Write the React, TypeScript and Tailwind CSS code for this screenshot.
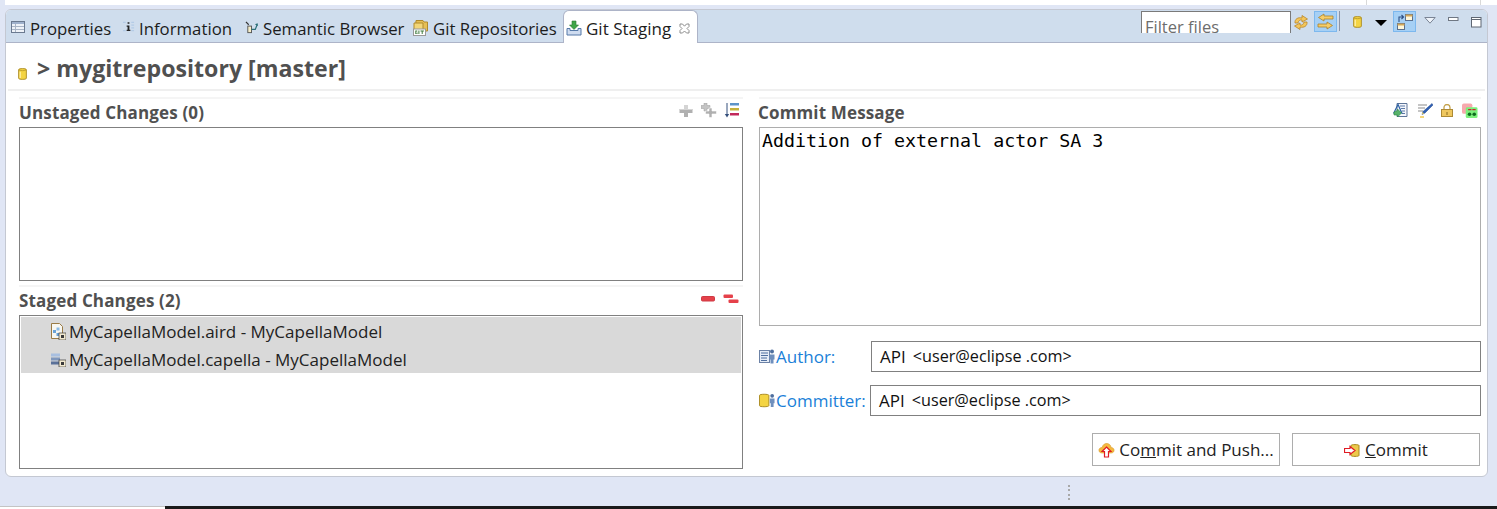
import React from 'react';

const uiFont = "font-['Open_Sans','Noto_Sans',sans-serif]";

const PropertiesIcon = () => (
  <svg width="15" height="14" viewBox="0 0 15 14" className="shrink-0">
    <rect x="0.5" y="1.5" width="13" height="11" fill="#eef2f8" stroke="#6b7a90" />
    <rect x="1" y="2" width="12" height="2" fill="#9fb1cc" />
    <path d="M1 6.5h12M1 9.5h12M4.5 4v8" stroke="#a9b5c6" />
  </svg>
);

const InformationIcon = () => (
  <svg width="13" height="14" viewBox="0 0 14 14" className="shrink-0">
    <path d="M1 2h3M1 11h3M10 2h3M10 5h3M10 8h3M10 11h3" stroke="#b4cbe6" strokeWidth="1.4" />
    <path d="M6 2h2v1.5H6zM5 5.5h3V10h1v1.2H5V10h1V6.7H5z" fill="#222" />
  </svg>
);

const SemanticIcon = () => (
  <svg width="14" height="15" viewBox="0 0 15 15" className="shrink-0">
    <path d="M1 1.5l3 3" stroke="#333" strokeWidth="1.3" />
    <rect x="3" y="6" width="4" height="7" fill="#f6eec8" stroke="#555" />
    <path d="M7 9.5h4l2-5" fill="none" stroke="#2b6f77" strokeWidth="1.3" />
    <path d="M10.5 4l3-1 .5 3z" fill="#2b6f77" />
  </svg>
);

const GitReposIcon = () => (
  <svg width="16" height="17" viewBox="0 0 16 17" className="shrink-0">
    <path d="M3 1.5h7l1 1.5h3.5v9h-12z" fill="#e6bf55" stroke="#b08a2c" />
    <path d="M1 4h9v8H1z" fill="#f2d679" stroke="#b08a2c" />
    <rect x="0.5" y="10" width="12" height="6.5" fill="#fff" stroke="#999" />
    <path d="M2.3 11.5h2v1h-1v2h.6v-1h.6V15H2.3zM5.4 11.5h1v3.5h-1zM7.5 11.5h3.4v1H9.7V15H8.7v-2.5H7.5z" fill="#3c7a3c" />
  </svg>
);

const StagingIcon = () => (
  <svg width="16" height="16" viewBox="0 0 16 16" className="shrink-0">
    <path d="M1 8.5h3v2h8v-2h3V15H1z" fill="#cfdcf0" stroke="#5579a8" />
    <path d="M6 1h4v4h2.500L8 9.500 3.500 5H6z" fill="#3fa548" stroke="#2b7a33" strokeWidth="0.6" />
  </svg>
);

const CloseIcon = () => (
  <svg width="11" height="11" viewBox="0 0 11 11" className="shrink-0">
    <path
      d="M1 1h2.5L5.5 3.2 7.5 1H10v2.5L8 5.5l2 2V10H7.5l-2-2-2 2H1V7.5l2-2-2-2z"
      fill="#fff"
      stroke="#8d8d8d"
    />
  </svg>
);

// the yellow repository barrel, used all over the view
const Barrel = ({ w = 10, h = 14 }: { w?: number; h?: number }) => (
  <svg width={w} height={h} viewBox="0 0 10 14" className="shrink-0">
    <path d="M.7 2.2C.7.6 9.3.6 9.3 2.2v9.6c0 1.6-8.6 1.6-8.6 0z" fill="#f4d443" stroke="#a98920" />
    <path d="M.9 2.4c1.4 1.2 6.8 1.2 8.2 0" fill="none" stroke="#a98920" strokeWidth="0.7" />
    <path d="M2.5 4.5v7" stroke="#fdf0a5" strokeWidth="1.4" />
  </svg>
);

const SyncIcon = () => (
  <svg width="16" height="17" viewBox="0 0 16 17">
    <path d="M2 9C1.500 5 5 3 9 4V1.500L14.500 5 9 8V6C7 5.600 5.500 6.500 5 9z" fill="#f4c65a" stroke="#b8862a" strokeWidth="0.8" />
    <path d="M14 8c.5 4-3 6-7 5v2.500L1.500 12 7 9v2c2 .4 3.500-.5 4-3z" fill="#f4c65a" stroke="#b8862a" strokeWidth="0.8" />
  </svg>
);

const LinkIcon = () => (
  <svg width="17" height="17" viewBox="0 0 17 17">
    <path d="M7 1L1.500 4.500 7 8V6h9V3H7z" fill="#f6cd68" stroke="#a9802b" strokeWidth="0.8" />
    <path d="M10 9l5.500 3.500L10 16v-2H1v-3h9z" fill="#f6cd68" stroke="#a9802b" strokeWidth="0.8" />
  </svg>
);

const LayoutIcon = () => (
  <svg width="18" height="18" viewBox="0 0 18 18">
    <rect x="9.500" y="1.500" width="7" height="6" fill="#fff8dc" stroke="#5c6f8c" />
    <path d="M9.500 1.500h7v2h-7z" fill="#d2a85a" />
    <rect x="1.500" y="10.500" width="7" height="6" fill="#fff8dc" stroke="#5c6f8c" />
    <path d="M1.500 10.500h7v2h-7z" fill="#d2a85a" />
    <path d="M3 9V4h4M5.500 2L7.500 4 5.500 6" fill="none" stroke="#2f4f82" strokeWidth="1.1" />
  </svg>
);

const ViewMenuIcon = () => (
  <svg width="12" height="7" viewBox="0 0 12 7">
    <path d="M.8.5h10.400L6 6.200z" fill="#eef3fa" stroke="#7a8494" />
  </svg>
);

const MinimizeIcon = () => (
  <svg width="11" height="5" viewBox="0 0 11 5">
    <rect x="0.500" y="0.500" width="9.500" height="3" fill="#fff" stroke="#6f7783" />
  </svg>
);

const MaximizeIcon = () => (
  <svg width="11" height="11" viewBox="0 0 11 11">
    <rect x="0.500" y="0.500" width="9.500" height="9.500" fill="#fff" stroke="#5f6773" />
    <path d="M.5 2.500h9.500" stroke="#5f6773" />
  </svg>
);

const PlusIcon = () => (
  <svg width="14" height="14" viewBox="0 0 14 14">
    <path d="M5 1h4v4h4.500v4H9v4H5V9H.5V5H5z" fill="#b0b0b0" />
    <path d="M.5 5H5V1h4v4h4.500v1H.5z" fill="#d4d4d4" />
  </svg>
);

const PlusAllIcon = () => (
  <svg width="16" height="15" viewBox="0 0 16 15">
    <path d="M3 0h3v2.500h3v3H6V8H3V5.500H0v-3h3z" fill="#c4c4c4" stroke="#9c9c9c" strokeWidth="0.5" />
    <path d="M8 5h3v3h4.500v3H11v3.500H8V11H4.500V8H8z" fill="#b0b0b0" stroke="#fff" strokeWidth="0.6" />
  </svg>
);

const SortIcon = () => (
  <svg width="15" height="17" viewBox="0 0 15 17">
    <path d="M3 1v12" stroke="#35507c" strokeWidth="1" />
    <path d="M.8 12h4.400L3 15.500z" fill="#35507c" />
    <rect x="6" y="1" width="9" height="2.500" fill="#5c93c9" />
    <rect x="6" y="6" width="9" height="2.500" fill="#c4b13c" />
    <rect x="6" y="11" width="9" height="2.500" fill="#c2285a" />
  </svg>
);

const MinusIcon = () => (
  <svg width="14" height="6" viewBox="0 0 14 6">
    <rect x="0.500" y="0.500" width="13" height="4.500" rx="1" fill="#e5414a" stroke="#cf3a44" />
  </svg>
);

const MinusAllIcon = () => (
  <svg width="16" height="10" viewBox="0 0 16 10">
    <rect x="0.500" y="0.500" width="9.500" height="3.500" rx="1" fill="#e5414a" />
    <rect x="5.500" y="5.500" width="10" height="3.500" rx="1" fill="#e5414a" />
  </svg>
);

const AmendIcon = () => (
  <svg width="15" height="15" viewBox="0 0 15 15">
    <path d="M4 .5h10v13H4z" fill="#f4f6fb" stroke="#5e7598" />
    <path d="M7 3h5M8 5.500h4M9 8h3M9 10.500h3" stroke="#5d7aa8" />
    <path d="M5 1.500L.8 10h8z" fill="none" stroke="#2e62a5" strokeWidth="1.200" />
    <path d="M1 9l3.500-1.500V6L8.500 10l-4 4v-2H1z" fill="#58b26a" stroke="#2e8a45" strokeWidth="0.600" />
  </svg>
);

const SignOffIcon = () => (
  <svg width="16" height="15" viewBox="0 0 16 15">
    <path d="M1 2h9M1 5h7M1 8h5" stroke="#8c8c8c" strokeWidth="1.100" />
    <path d="M15 .5l1 1.500-8 8-3 1.500 1-3z" fill="#2f5fb5" stroke="#23488a" strokeWidth="0.500" />
    <path d="M5 11.500l2-1-1.500-1.500z" fill="#f3d35a" />
    <path d="M3 14h4" stroke="#f2c94c" strokeWidth="1.500" />
  </svg>
);

const LockIcon = () => (
  <svg width="12" height="13" viewBox="0 0 12 13">
    <path d="M3 6V3.500a3 3 0 016 0V6" fill="none" stroke="#c4a24c" strokeWidth="1.300" />
    <rect x="0.500" y="5.500" width="11" height="7" fill="#efc75e" stroke="#ad8a34" />
    <rect x="5.500" y="8" width="1" height="3" fill="#8a6b20" />
  </svg>
);

const ChangeIdIcon = () => (
  <svg width="16" height="16" viewBox="0 0 17 16">
    <rect x="0" y="0" width="11" height="11" rx="2" fill="#f7a9ad" />
    <rect x="4" y="4" width="12.500" height="11.500" rx="1.500" fill="#7cf07c" />
    <path d="M6.500 6.500h3.500M11 6.500h3.500" stroke="#cc2030" strokeWidth="1.500" />
    <circle cx="8" cy="11.500" r="1.900" fill="#0d6b1d" />
    <circle cx="13" cy="11.500" r="1.900" fill="#0d6b1d" />
  </svg>
);

const AirdIcon = () => (
  <svg width="16" height="17" viewBox="0 0 16 17">
    <path d="M1.500.500h8l3 3v12h-11z" fill="#f7f7f2" stroke="#9a7b45" />
    <rect x="3" y="7" width="3" height="3" fill="#6aa3d8" />
    <rect x="6.500" y="4.500" width="3" height="3" fill="#8bbbe6" />
    <rect x="6.500" y="10" width="3" height="3" fill="#6aa3d8" />
    <rect x="9" y="10" width="7" height="7" fill="#f3ead0" stroke="#3a3a3a" strokeWidth="0.700" />
    <path d="M11 12h3v3h-3z" fill="#3a3a3a" />
  </svg>
);

const CapellaIcon = () => (
  <svg width="16" height="16" viewBox="0 0 16 16">
    <path d="M1 2.500h9v3H1z" fill="#a8bfe0" />
    <path d="M1 6.500h9v3H1z" fill="#7f97bd" />
    <path d="M1 10.500h9v3H1z" fill="#5a7199" />
    <rect x="9" y="9" width="7" height="7" fill="#f3ead0" stroke="#3a3a3a" strokeWidth="0.700" />
    <path d="M11 11h3v3h-3z" fill="#3a3a3a" />
  </svg>
);

const AuthorIcon = () => (
  <svg width="16" height="15" viewBox="0 0 16 15">
    <rect x="0.500" y="1.500" width="10" height="12" fill="#e6edf7" stroke="#6c82a6" />
    <path d="M2 4h7M2 6.500h7M2 9h6M2 11.500h6" stroke="#4f6f9f" />
    <circle cx="13" cy="2.500" r="2" fill="#4f6f9f" />
    <path d="M10.500 5.500h5v5h-1v4h-3v-4h-1z" fill="#6f8fbd" />
  </svg>
);

const CommitterIcon = () => (
  <svg width="16" height="15" viewBox="0 0 17 15">
    <path d="M.5 2C.5.500 10.500.500 10.500 2v11c0 1.500-10 1.500-10 0z" fill="#f4d443" stroke="#a98920" />
    <circle cx="14" cy="2.500" r="2" fill="#4f6f9f" />
    <path d="M11.500 5.500h5v5h-1v4h-3v-4h-1z" fill="#6f8fbd" />
  </svg>
);

const PushIcon = () => (
  <svg width="17" height="16" viewBox="0 0 17 16">
    <path d="M1 9c-.5-2 1-3.500 3-3.500C5 2.500 7 1 9.500 1.500 12 2 13 4 13 5.500c2 0 3.500 1.500 3 3.500-.3 1.200-1.500 2-3 2H4c-1.500 0-2.700-.8-3-2z" fill="#f5b93f" stroke="#d99a2b" strokeWidth="0.600" />
    <path d="M8.500 5L13 9.500h-2.500V15h-4V9.500H4z" fill="#fff" stroke="#e01b24" strokeWidth="1.200" />
  </svg>
);

const CommitIcon = () => (
  <svg width="16" height="13" viewBox="0 0 16 13">
    <path d="M7 1.500C7 .3 15 .3 15 1.500v10c0 1.200-8 1.200-8 0z" fill="#ecc94b" stroke="#a98920" />
    <path d="M6 2.500L11 6.500 6 10.500V8.500H.5v-4H6z" fill="#fff" stroke="#e01b24" strokeWidth="1.200" />
  </svg>
);

const Tab = ({ icon, label, className }: { icon: React.ReactNode; label: string; className: string }) => (
  <div className={`flex items-center gap-[4px] pt-[2px] ${className}`}>
    {icon}
    <span className="mt-[3px] text-[16.800px] text-[#1c1c1c]">{label}</span>
  </div>
);

const SectionHead = ({ title, children, className }: { title: string; children?: React.ReactNode; className?: string }) => (
  <div className="flex h-[28px] items-center justify-between">
    <span className={`text-[17px] font-bold tracking-[0.150px] text-[#505050] ${className ?? ''}`}>{title}</span>
    <div className="-mt-[5px] flex items-center">{children}</div>
  </div>
);

const FieldRow = ({
  icon,
  label,
  labelWidth,
  className,
}: {
  icon: React.ReactNode;
  label: string;
  labelWidth: string;
  className: string;
}) => (
  <div className={`flex items-center ${className}`}>
    <div className={`flex items-center gap-[1px] ${labelWidth}`}>
      {icon}
      <span className="text-[17px] text-[#1a7fd8]">{label}</span>
    </div>
    <div className="flex h-[31px] flex-1 items-center border border-[#808080] pl-[8px] text-[17px] text-[#111]">
      API<span className="ml-[7px] text-[16.200px]">&lt;user@eclipse</span>
      <span className="text-[16.200px]">&nbsp;.com&gt;</span>
    </div>
  </div>
);

export default function App() {
  return (
    <div className={`flex h-[509px] w-[1497px] flex-col overflow-hidden bg-[#e0e6f5] ${uiFont}`}>
      {/* strip of the view above */}
      <div className="ml-[5px] flex h-[5px] overflow-hidden bg-white">
        <div className="ml-[1361px] h-full w-[1px] bg-[#d9d9d9]" />
        <span className="ml-[25px] -mt-[18px] text-[16px] leading-[22px] text-[#222]">Commit</span>
        <div className="ml-[29px] h-full w-[1px] bg-[#d9d9d9]" />
      </div>

      <div className="ml-[5px] mt-[4px] flex h-[468px] w-[1483px] flex-col overflow-hidden rounded-[6px] border border-[#c4c8d2] bg-white">
        {/* tab bar */}
        <div className="flex h-[33px] shrink-0 items-stretch border-b border-[#adb4c8] bg-[#cfdded]">
          <Tab icon={<PropertiesIcon />} label="Properties" className="ml-[5px] w-[111px]" />
          <Tab icon={<InformationIcon />} label="Information" className="w-[123px]" />
          <Tab icon={<SemanticIcon />} label="Semantic Browser" className="w-[168px]" />
          <Tab icon={<GitReposIcon />} label="Git Repositories" className="w-[150px]" />
          <div className="-mb-[1px] flex w-[135px] items-center rounded-t-[6px] border border-b-0 border-[#adb4c8] bg-white pl-[2px] pt-[2px]">
            <StagingIcon />
            <span className="ml-[4px] mt-[2px] text-[17px] text-[#1c1c1c]">Git Staging</span>
            <span className="ml-[8px]">
              <CloseIcon />
            </span>
          </div>

          {/* view toolbar */}
          <div className="ml-[443px] flex items-start pt-[1px]">
            <div className="h-[22px] w-[150px] overflow-hidden border border-b-0 border-[#7a7a7a] bg-white pl-[3px] text-[16.500px] leading-[29px] text-[#6d6d6d]">
              Filter files
            </div>
            <div className="ml-[2px] mt-[3px]">
              <SyncIcon />
            </div>
            <div className="ml-[5px] flex h-[21px] w-[23px] items-center justify-center border border-[#7db8ee] bg-[#a6d0f5]">
              <LinkIcon />
            </div>
            <div className="ml-[2px] h-[20px] w-[1px] bg-[#8a94a8]" />
            <div className="ml-[13px] mt-[4px]">
              <Barrel w={9} h={14} />
            </div>
            <div className="ml-[13px] mt-[9px] h-0 w-0 border-x-[6px] border-t-[6px] border-x-transparent border-t-black" />
            <div className="ml-[6px] flex h-[21px] w-[23px] items-center justify-center border border-[#7db8ee] bg-[#a6d0f5]">
              <LayoutIcon />
            </div>
            <div className="ml-[8px] mt-[6px] flex">
              <ViewMenuIcon />
            </div>
            <div className="ml-[12px] mt-[6px] flex">
              <MinimizeIcon />
            </div>
            <div className="ml-[12px] mt-[6px] flex">
              <MaximizeIcon />
            </div>
          </div>
        </div>

        {/* form title */}
        <div className="mx-[2px] flex h-[48px] shrink-0 items-center border-b-2 border-[#efefef] pl-[10px] pt-[6px]">
          <div className="mt-[10px]">
            <Barrel w={9} h={14} />
          </div>
          <span className="ml-[10px] text-[23.150px] font-bold leading-none text-[#505050]">&gt; mygitrepository [master]</span>
        </div>

        <div className="flex flex-1 pt-[6px]">
          {/* left column */}
          <div className="ml-[13px] flex w-[724px] flex-col">
            <div className="h-[2px] border-t-2 border-[#f5f5f5]" />
            <SectionHead title="Unstaged Changes (0)">
              <PlusIcon />
              <span className="ml-[8px] flex">
                <PlusAllIcon />
              </span>
              <span className="ml-[7px] mr-[4px] flex">
                <SortIcon />
              </span>
            </SectionHead>
            <div className="h-[154px] border border-[#808080]" />
            <div className="mt-[4px] h-[2px] border-t-2 border-[#f5f5f5]" />
            <SectionHead title="Staged Changes (2)">
              <MinusIcon />
              <span className="ml-[8px] mr-[4px] flex">
                <MinusAllIcon />
              </span>
            </SectionHead>
            <div className="h-[154px] border border-[#808080] p-[1px]">
              <div className="bg-[#d9d9d9] text-[17px] text-[#222]">
                <div className="flex h-[28px] items-center gap-[3px] pl-[29px]">
                  <AirdIcon />
                  <span className="mt-[1px]">MyCapellaModel.aird - MyCapellaModel</span>
                </div>
                <div className="flex h-[28px] items-center gap-[3px] pl-[29px]">
                  <CapellaIcon />
                  <span className="mt-[1px]">MyCapellaModel.capella - MyCapellaModel</span>
                </div>
              </div>
            </div>
          </div>

          {/* right column */}
          <div className="ml-[16px] flex w-[722px] flex-col">
            <div className="h-[2px] border-t-2 border-[#f5f5f5]" />
            <SectionHead title="Commit Message" className="-ml-[1px]">
              <AmendIcon />
              <span className="ml-[9px] flex">
                <SignOffIcon />
              </span>
              <span className="ml-[8px] flex">
                <LockIcon />
              </span>
              <span className="ml-[9px] mr-[3px] flex">
                <ChangeIdIcon />
              </span>
            </SectionHead>
            <div className="h-[199px] border border-[#adadad] px-[2px] py-[1px] font-['DejaVu_Sans_Mono',monospace] text-[18.300px] leading-[24px] text-black">
              Addition of external actor SA 3
            </div>
            <FieldRow icon={<AuthorIcon />} label="Author:" labelWidth="w-[112px]" className="mt-[15px]" />
            <FieldRow icon={<CommitterIcon />} label="Committer:" labelWidth="w-[111px]" className="mt-[13px]" />
            <div className="mt-[17px] flex justify-end gap-[12px] pr-[1px]">
              <button className="flex h-[33px] w-[188px] items-center justify-center gap-[4px] border border-[#adadad] pt-[1px] text-[17px] text-[#222]">
                <PushIcon />
                <span>
                  Co<span className="underline">m</span>mit and Push...
                </span>
              </button>
              <button className="flex h-[33px] w-[188px] items-center justify-center gap-[5px] border border-[#adadad] pt-[1px] text-[17px] text-[#222]">
                <CommitIcon />
                <span>
                  <span className="underline">C</span>ommit
                </span>
              </button>
            </div>
          </div>
        </div>
      </div>

      {/* sash grip */}
      <div className="ml-[1068px] mt-[8px] flex h-[15px] w-[2px] flex-col justify-between">
        <div className="h-[2px] w-[2px] bg-[#a8a8a8]" />
        <div className="h-[2px] w-[2px] bg-[#a8a8a8]" />
        <div className="h-[2px] w-[2px] bg-[#a8a8a8]" />
        <div className="h-[2px] w-[2px] bg-[#a8a8a8]" />
      </div>

      {/* bottom edge of the window */}
      <div className="mt-[6px] flex h-[3px] shrink-0">
        <div className="w-[165px] border-t border-[#c4c4c4] bg-white" />
        <div className="flex-1 bg-[#1a1a1a]" />
      </div>
    </div>
  );
}
